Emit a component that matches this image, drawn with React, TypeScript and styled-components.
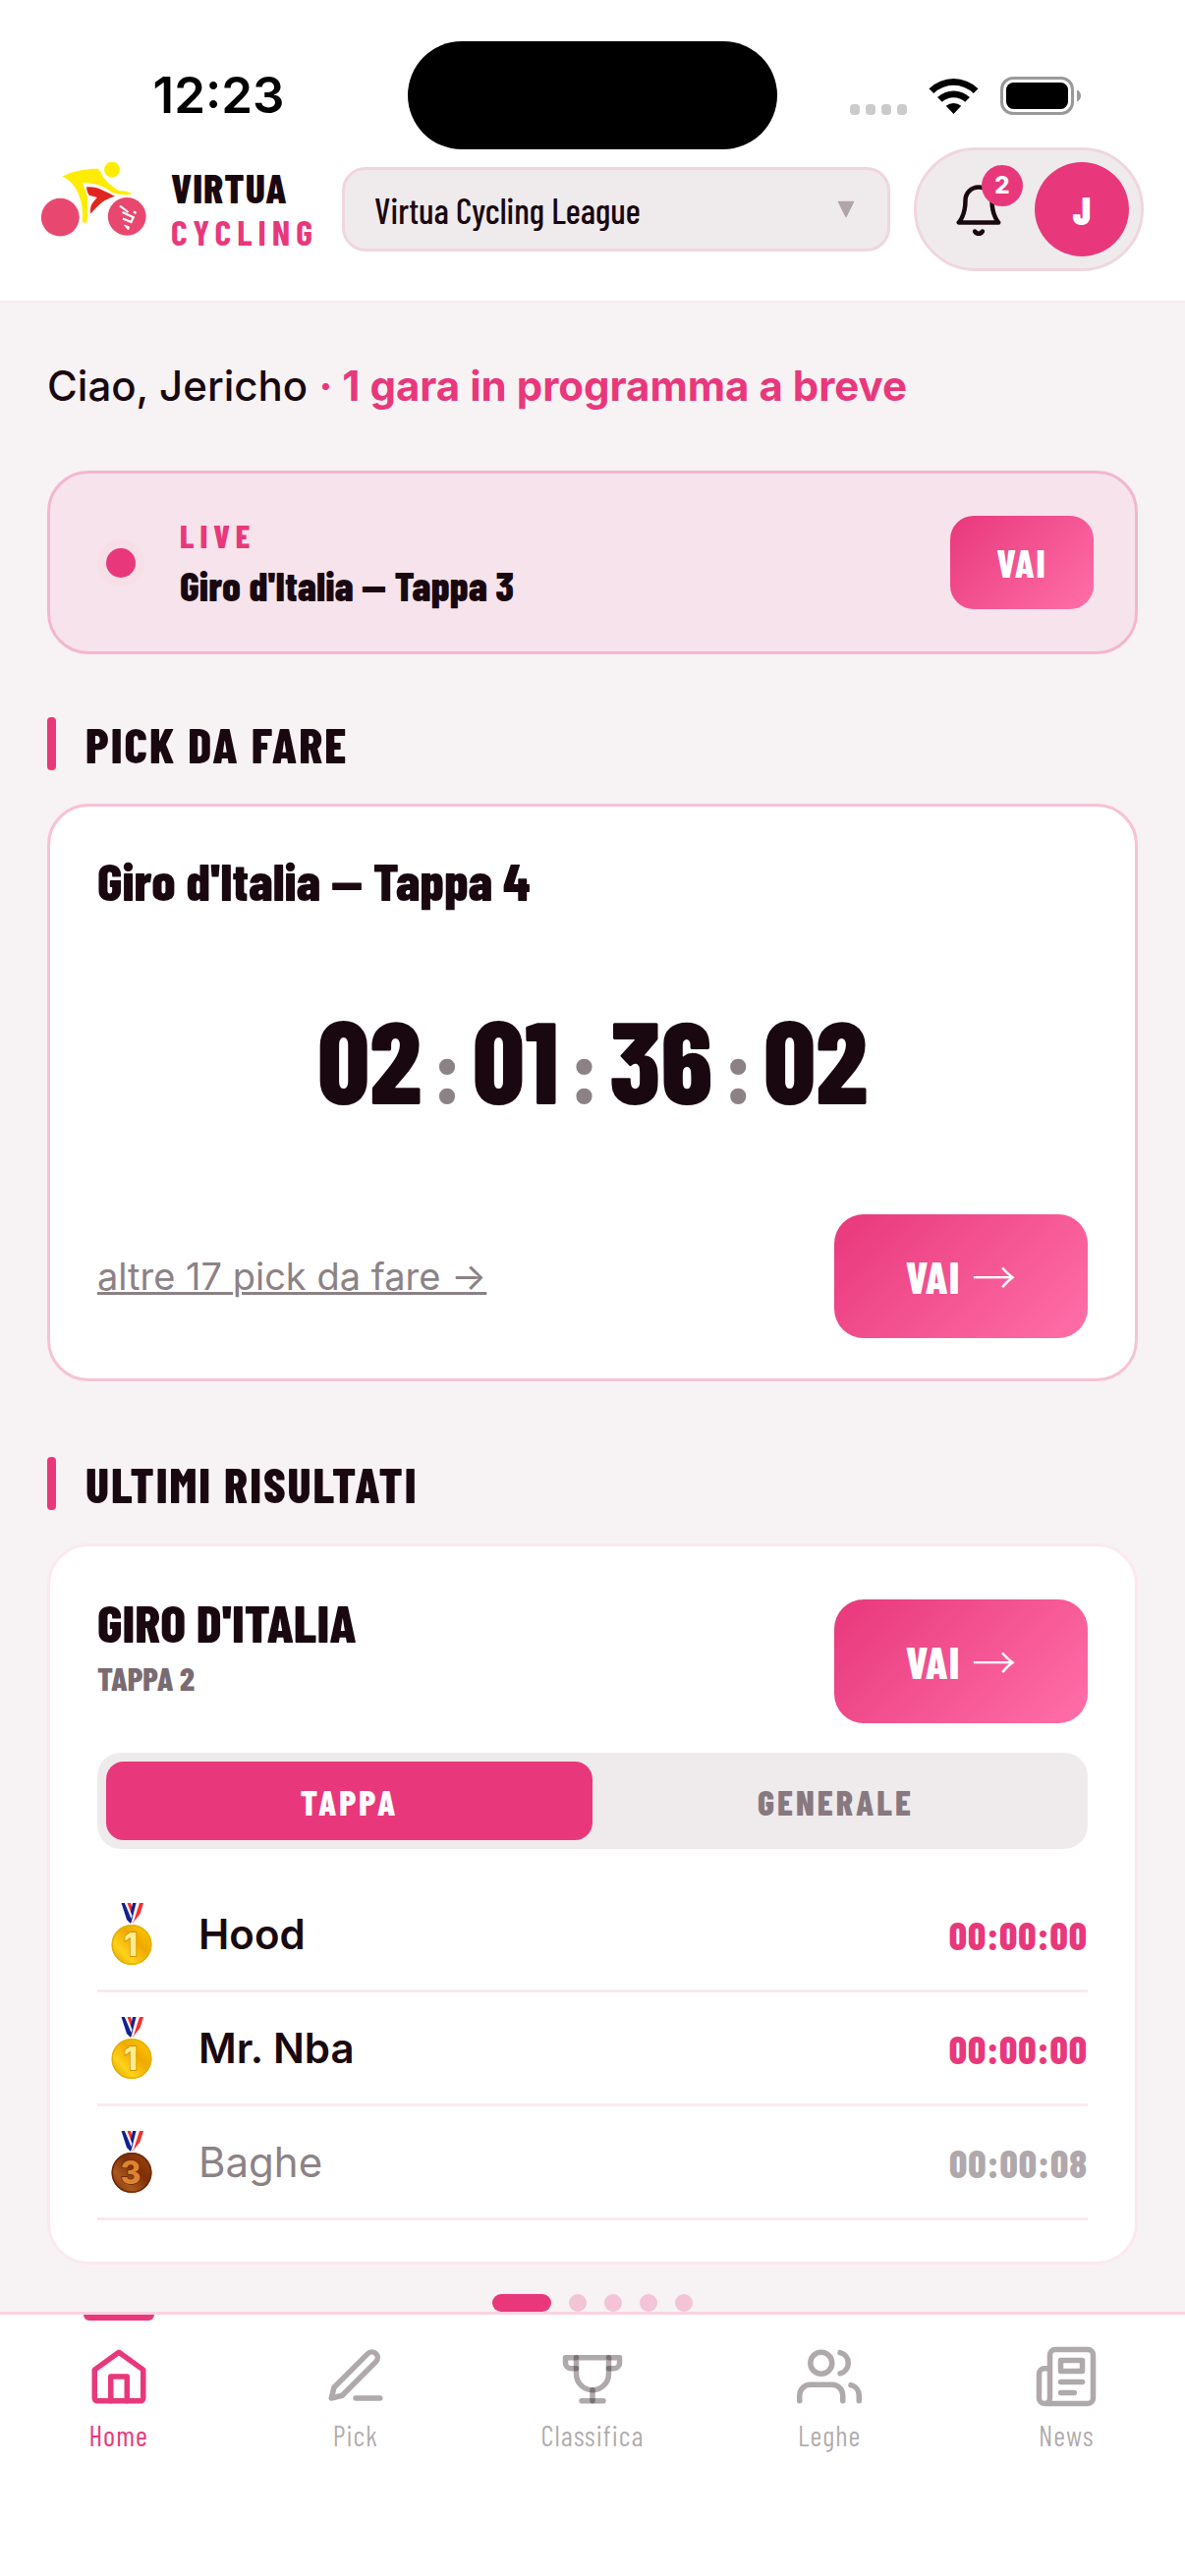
import React, { useState } from 'react';
import styled, { createGlobalStyle, css } from 'styled-components';

const ink = '#1a0810';
const pink = '#e8387b';
const muted = '#8c8286';
const faint = 'rgba(26, 8, 16, 0.35)';
const condensed = '"Barlow Condensed", "Roboto Condensed", sans-serif';
const gradient = 'linear-gradient(135deg, #e8387b, #ff6fa8)';

const GlobalStyle = createGlobalStyle`
  *, *::before, *::after { box-sizing: border-box; }
  body { margin: 0; background: #f7f2f4; color: ${ink}; font-family: Inter, "Open Sans", sans-serif; }
  button, select { font-family: inherit; color: inherit; margin: 0; }
  h1, h2, h3, p, ol, ul { margin: 0; padding: 0; font-weight: inherit; }
  ol, ul { list-style: none; }
  a { color: inherit; text-decoration: none; }
`;

const Page = styled.div`
  display: flex;
  flex-direction: column;
  min-height: 100vh;
`;

const StatusBar = styled.div`
  display: grid;
  grid-template-columns: 1fr auto 1fr;
  grid-template-rows: 110px;
  align-items: center;
  justify-items: center;
  height: 150px;
  padding-top: 42px;
  background: #fff;
  color: #000;
`;

const Clock = styled.time`
  padding-left: 30px;
  font-size: 51px;
  line-height: 60px;
  font-weight: 600;
`;

const Island = styled.div`
  position: relative;
  z-index: 1;
  width: 376px;
  height: 110px;
  border-radius: 55px;
  background: #000;
`;

const StatusIcons = styled.div`
  display: flex;
  align-items: center;
  gap: 22px;
  padding-right: 33px;

  svg { display: block; }
`;

const Header = styled.header`
  display: flex;
  align-items: center;
  gap: 24px;
  padding: 0 42px 30px;
  background: #fff;
  border-bottom: 2px solid #fce8ef;
`;

const Brand = styled.a`
  display: flex;
  align-items: center;
  gap: 24px;
  font-family: ${condensed};

  svg { display: block; }
`;

const BrandName = styled.span`
  display: block;
  font-size: 42px;
  line-height: 46px;
  font-weight: 800;
  letter-spacing: 1px;
`;

const BrandSub = styled.span`
  display: block;
  font-size: 36px;
  line-height: 46px;
  font-weight: 700;
  letter-spacing: 6px;
  color: ${pink};
`;

const LeagueField = styled.label`
  position: relative;
  display: flex;
  flex: 1;
  min-width: 0;

  svg {
    position: absolute;
    right: 36px;
    top: 34px;
    pointer-events: none;
  }
`;

const LeagueSelect = styled.select`
  appearance: none;
  width: 100%;
  height: 86px;
  padding: 0 72px 0 30px;
  border: 3px solid #f0d5df;
  border-radius: 24px;
  background: #efebed;
  color: ${ink};
  font-family: ${condensed};
  font-size: 36px;
  font-weight: 500;
`;

const AccountPill = styled.div`
  display: flex;
  align-items: center;
  gap: 6px;
  padding: 12px;
  border: 3px solid #f0d5df;
  border-radius: 63px;
  background: #efebed;
`;

const BellButton = styled.button`
  position: relative;
  display: grid;
  place-items: center;
  width: 102px;
  height: 96px;
  padding: 0;
  border: 0;
  background: none;
`;

const Badge = styled.span`
  position: absolute;
  top: 3px;
  right: 6px;
  width: 42px;
  height: 42px;
  border-radius: 50%;
  background: ${pink};
  color: #fff;
  font-family: Inter, sans-serif;
  font-size: 24px;
  line-height: 42px;
  font-weight: 800;
  text-align: center;
`;

const Avatar = styled.button`
  width: 96px;
  height: 96px;
  padding: 0;
  border: 0;
  border-radius: 50%;
  background: ${pink};
  color: #fff;
  font-family: ${condensed};
  font-size: 39px;
  font-weight: 900;
`;

const Main = styled.main`
  flex: 1;
  padding: 54px 48px 0;
`;

const Greeting = styled.p`
  margin-bottom: 54px;
  font-size: 42px;
  line-height: 62px;
  font-weight: 500;

  strong { font-weight: 700; color: ${pink}; }
`;

const LiveCard = styled.section`
  display: flex;
  align-items: center;
  gap: 36px;
  margin: 55px 0 64px;
  padding: 43px 42px 43px 48px;
  border: 3px solid #f3b6ce;
  border-radius: 42px;
  background: #f6e3eb;
`;

const LiveDot = styled.span`
  width: 30px;
  height: 30px;
  margin: 9px;
  border-radius: 50%;
  background: ${pink};
  box-shadow: 0 0 0 9px #f7dfe8;
`;

const LiveText = styled.div`
  display: flex;
  flex: 1;
  flex-direction: column;
  gap: 6px;
  height: 95px;
  justify-content: center;
  font-family: ${condensed};
`;

const LiveLabel = styled.p`
  font-size: 33px;
  line-height: 38px;
  font-weight: 800;
  letter-spacing: 6px;
  color: ${pink};
`;

const LiveTitle = styled.h2`
  font-size: 42px;
  line-height: 50px;
  font-weight: 800;
`;

const GoButton = styled.button<{ $small?: boolean }>`
  display: flex;
  align-items: center;
  justify-content: center;
  gap: 12px;
  flex: none;
  width: 258px;
  height: 126px;
  padding: 0;
  border: 0;
  border-radius: 30px;
  background: ${gradient};
  color: #fff;
  font-family: ${condensed};
  font-size: 45px;
  font-weight: 800;
  letter-spacing: 1px;
  ${(p) => p.$small && css`
    width: 146px;
    height: 95px;
    border-radius: 24px;
    font-size: 39px;
    letter-spacing: 2px;
  `}
`;

const Arrow = styled.span`
  font-family: "Noto Sans CJK JP", sans-serif;
  font-weight: 300;
  line-height: 48px;
  letter-spacing: 0;
`;

const SectionTitle = styled.h2`
  display: flex;
  gap: 30px;
  margin-bottom: 34px;
  font-family: ${condensed};
  font-size: 50px;
  line-height: 54px;
  font-weight: 800;
  letter-spacing: 2px;
  text-transform: uppercase;

  &::before {
    content: "";
    width: 9px;
    border-radius: 4px;
    background: ${pink};
  }
`;

const PickCard = styled.section`
  margin-bottom: 77px;
  padding: 42px 48px 41px;
  border: 3px solid #f7c1d6;
  border-radius: 42px;
  background: #fff;
`;

const PickTitle = styled.h3`
  font-family: ${condensed};
  font-size: 54px;
  line-height: 65px;
  font-weight: 800;
`;

const Countdown = styled.div`
  display: flex;
  align-items: baseline;
  justify-content: center;
  gap: 12px;
  margin: 91px 0 101px;
  font-family: ${condensed};
  font-size: 117px;
  line-height: 116px;
  font-weight: 800;
`;

const Colon = styled.span`
  color: ${muted};
  font-size: 93px;
  line-height: 90px;
`;

const CardFooter = styled.div`
  display: flex;
  align-items: center;
  justify-content: space-between;
`;

const MoreLink = styled.a`
  color: ${muted};
  font-size: 38px;
  text-decoration: underline;
  text-decoration-thickness: 3px;
`;

const ResultCard = styled.section`
  padding: 54px 48px 42px;
  border: 3px solid #fce8ef;
  border-radius: 42px;
  background: #fff;
`;

const ResultHead = styled.div`
  display: flex;
  justify-content: space-between;
  margin-bottom: 30px;
  font-family: ${condensed};
`;

const ResultTitle = styled.h3`
  margin-bottom: 12px;
  font-size: 54px;
  line-height: 45px;
  font-weight: 800;
`;

const ResultStage = styled.p`
  font-size: 33px;
  line-height: 46px;
  font-weight: 800;
  color: #7a6b72;
`;

const Tabs = styled.div`
  display: grid;
  grid-template-columns: 1fr 1fr;
  margin-bottom: 30px;
  padding: 9px;
  border-radius: 24px;
  background: #efebed;
`;

const Tab = styled.button<{ $active: boolean }>`
  height: 80px;
  padding: 0;
  border: 0;
  border-radius: 18px;
  background: ${(p) => (p.$active ? pink : 'transparent')};
  color: ${(p) => (p.$active ? '#fff' : '#87797f')};
  font-family: ${condensed};
  font-size: 36px;
  font-weight: 800;
  letter-spacing: 3px;
`;

const Row = styled.li<{ $dim: boolean }>`
  display: grid;
  grid-template-columns: 70px 1fr auto;
  align-items: center;
  column-gap: 33px;
  height: 116px;
  border-bottom: 3px solid #fce8ef;
  font-size: 42px;
  line-height: 50px;
  font-weight: ${(p) => (p.$dim ? 400 : 600)};
  color: ${(p) => (p.$dim ? muted : ink)};

  svg { display: block; margin: 0 auto; }
`;

const Gap = styled.span<{ $dim: boolean }>`
  font-family: ${condensed};
  font-size: 40px;
  font-weight: 800;
  letter-spacing: 1px;
  color: ${(p) => (p.$dim ? '#b0a8ab' : pink)};
`;

const Pager = styled.div`
  display: flex;
  justify-content: center;
  gap: 18px;
  padding-top: 30px;
`;

const PagerDot = styled.button<{ $active: boolean }>`
  width: ${(p) => (p.$active ? 60 : 18)}px;
  height: 18px;
  padding: 0;
  border: 0;
  border-radius: 9px;
  background: ${(p) => (p.$active ? pink : '#f3c3d6')};
`;

const Nav = styled.nav`
  display: grid;
  grid-template-columns: repeat(5, 1fr);
  padding-bottom: 125px;
  border-top: 3px solid #fad3e1;
  background: #fff;
`;

const NavItem = styled.a<{ $active?: boolean }>`
  display: flex;
  flex-direction: column;
  align-items: center;
  gap: 9px;
  color: ${(p) => (p.$active ? pink : faint)};
  font-family: ${condensed};
  font-size: 29px;
  line-height: 36px;
  font-weight: 400;
  letter-spacing: 1px;

  &::before {
    content: "";
    width: 72px;
    height: 6px;
    margin-bottom: 15px;
    border-radius: 0 0 6px 6px;
    background: ${(p) => (p.$active ? pink : 'transparent')};
  }
`;

const CyclistLogo = () => (
  <svg width="108" height="96" viewBox="0 0 108 96" aria-hidden="true">
    <circle cx="19.3" cy="56.2" r="19.4" fill="#e8486f" />
    <circle cx="87.2" cy="55.4" r="19.4" fill="#e8486f" />
    <circle cx="72" cy="7.6" r="7.9" fill="#ffec00" />
    <path fill="#ffec00" d="M21.5 14.5C32 9 46 6.6 57 6.7c3.5.5 4.4 6.500 6.800 9.600 4.200 5 9 9.500 15.200 12.700 4 .5 11 .5 13 3.800-6 .8-13.500.2-19-1.600-5.500-3-10.500-7-16.500-8.400-5-1.400-10-1.800-15-1.500 3 6 5.600 12 5.700 18 .2 8 0 15-.7 22.200h-4.700c.4-8 .2-15-1.400-21.500C38 30.500 33 20 21.500 14.500z" />
    <path fill="#e0261f" d="M46 25.400c6-.4 11.500.4 16 3 4.500 2 9 4 13 6.400-5 1.600-9.500 3.400-13.200 6.200-4.300 3.500-8 7.500-11.400 11.500-.8-3-.4-6 .4-8.500 1.700-3 3.700-5.500 6-8-3-.8-6-1.200-8.300-2.400C47 31 46.400 28.400 46 25.400z" />
    <g stroke="#fff" fill="none" strokeWidth="2.200">
      <path d="M80 44.500 88.500 51" />
      <path d="m82.500 51 12 5.500M94 50.500l2.500 1.500" />
      <path d="m83 57.500 8.500 3.500 2.500-5.500" />
      <path d="m84.500 64 5 2-1 3z" fill="#fff" strokeWidth="1" />
    </g>
  </svg>
);

const StatusGlyphs = () => (
  <>
    <svg width="58" height="39" viewBox="0 0 58 39" fill="#cbcbcb">
      {[0, 16, 32, 48].map((x) => <rect key={x} x={x} y="28" width="10" height="11" rx="4" />)}
    </svg>
    <svg width="51" height="37" viewBox="0 0 51 37">
      <path d="M0.500 11.200A36 36 0 0 1 50.500 11.200L45.800 16A29.300 29.300 0 0 0 5.200 16z" />
      <path d="M9 20A24 24 0 0 1 42 20L37.200 24.800A17.200 17.200 0 0 0 13.800 24.800z" />
      <path d="M17.800 28.800A12 12 0 0 1 33.200 28.800L25.500 37z" />
    </svg>
    <svg width="82" height="39" viewBox="0 0 82 39">
      <rect x="1.500" y="1.500" width="72" height="36" rx="11.500" fill="none" stroke="#999" strokeWidth="3" />
      <rect x="6" y="6" width="63" height="27" rx="7.500" />
      <path d="M78 13.500c2.600 1 4 3.400 4 6s-1.400 5-4 6z" fill="#999" />
    </svg>
  </>
);

const BellIcon = () => (
  <svg width="54" height="54" viewBox="0 0 24 24" fill="none" stroke={ink} strokeWidth="2" strokeLinecap="round" strokeLinejoin="round">
    <path d="M18 8A6 6 0 0 0 6 8c0 7-3 10-3 10h18s-3-3-3-10" />
    <path d="M13.730 22a2 2 0 0 1-3.460 0" />
  </svg>
);

const Medal = ({ place }: { place: number }) => {
  const gold = place === 1;
  const id = `medal-${place}`;
  return (
    <svg width="42" height="64" viewBox="0 0 42 64" role="img" aria-label={`${place}º posto`}>
      <defs>
        <linearGradient id={id} x1="0" y1="1" x2="1" y2="0">
          <stop offset="0" stopColor={gold ? '#d99a00' : '#7a2c06'} />
          <stop offset="0.3" stopColor={gold ? '#ffd21a' : '#a9571f'} />
          <stop offset="0.6" stopColor={gold ? '#f0a800' : '#7d2f07'} />
          <stop offset="1" stopColor={gold ? '#ffd000' : '#a04a12'} />
        </linearGradient>
      </defs>
      <path d="M16 0h4l4 13-3 5z" fill="#ff2a2a" />
      <path d="M28 0h5l-3.500 11-7 9-2-1z" fill="#ff2a2a" />
      <path d="M25 0h4l-6 19-3 1z" fill="#f4f4f8" />
      <path d="M22 0h3.500l-5 20-2-5z" fill="#12218f" />
      <path d="M10.500 0H14l7 15-1 6-4-4z" fill="#12218f" />
      <path d="M14 0h2.500l5 13-1 3z" fill="#f4f4f8" />
      <circle cx="21" cy="42.500" r="20.500" fill={`url(#${id})`} />
      <circle cx="21" cy="42.500" r="19.700" fill="none" stroke={gold ? '#e2b100' : '#6d2804'} strokeWidth="1.500" />
      <text x="20" y="53.500" textAnchor="middle" fontFamily="Inter, sans-serif" fontSize="32" fontWeight="800"
        fill={gold ? '#ffec8a' : '#dd8430'} stroke={gold ? '#c98a00' : '#6d2804'} strokeWidth="1.500" paintOrder="stroke">{place}</text>
    </svg>
  );
};

const icons: Record<string, string[]> = {
  Home: ['M3 9.500 12 3l9 6.500V20a1 1 0 0 1-1 1H4a1 1 0 0 1-1-1z', 'M9 21v-9h6v9'],
  Pick: ['M12 20h9', 'M16.500 3.500a2.120 2.120 0 0 1 3 3L7 19l-4 1 1-4Z'],
  Classifica: ['M6 9H4a2 2 0 0 1-2-2V5h4', 'M18 9h2a2 2 0 0 0 2-2V5h-4', 'M6 5h12v6a6 6 0 0 1-12 0z', 'M12 17v4', 'M8 21h8'],
  Leghe: ['M17 21v-2a4 4 0 0 0-4-4H5a4 4 0 0 0-4 4v2', 'M9 3a4 4 0 1 0 0 8 4 4 0 0 0 0-8', 'M23 21v-2a4 4 0 0 0-3-3.870', 'M16 3.130a4 4 0 0 1 0 7.750'],
  News: ['M4 22h16a2 2 0 0 0 2-2V4a2 2 0 0 0-2-2H8a2 2 0 0 0-2 2v16a2 2 0 0 1-2 2Zm0 0a2 2 0 0 1-2-2v-9c0-1.100.9-2 2-2h2', 'M18 14h-8', 'M15 18h-5', 'M10 6h8v4h-8V6Z'],
};

const NavIcon = ({ name }: { name: string }) => (
  <svg width="66" height="66" viewBox="0 0 24 24" fill="none" stroke="currentColor" strokeWidth="2" strokeLinecap="round" strokeLinejoin="round">
    {icons[name].map((d) => <path key={d} d={d} />)}
  </svg>
);

const results = [
  { name: 'Hood', place: 1, gap: '00:00:00' },
  { name: 'Mr. Nba', place: 1, gap: '00:00:00' },
  { name: 'Baghe', place: 3, gap: '00:00:08' },
];

const countdown = ['02', '01', '36', '02'];

export default function App() {
  const [tab, setTab] = useState('TAPPA');
  const [slide, setSlide] = useState(0);

  return (
    <Page>
      <GlobalStyle />
      <StatusBar>
        <Clock>12:23</Clock>
        <Island />
        <StatusIcons><StatusGlyphs /></StatusIcons>
      </StatusBar>
      <Header>
        <Brand href="#home">
          <CyclistLogo />
          <span>
            <BrandName>VIRTUA</BrandName>
            <BrandSub>CYCLING</BrandSub>
          </span>
        </Brand>
        <LeagueField>
          <LeagueSelect aria-label="Lega" defaultValue="vcl">
            <option value="vcl">Virtua Cycling League</option>
          </LeagueSelect>
          <svg width="18" height="18" viewBox="0 0 18 18" aria-hidden="true">
            <path d="M1.500 1.500h15L9 16.500z" fill="#b0a6aa" stroke="#b0a6aa" strokeWidth="1.500" strokeLinejoin="round" />
          </svg>
        </LeagueField>
        <AccountPill>
          <BellButton aria-label="Notifiche">
            <BellIcon />
            <Badge>2</Badge>
          </BellButton>
          <Avatar>J</Avatar>
        </AccountPill>
      </Header>

      <Main>
        <Greeting>Ciao, Jericho <strong>· 1 gara in programma a breve</strong></Greeting>

        <LiveCard>
          <LiveDot />
          <LiveText>
            <LiveLabel>LIVE</LiveLabel>
            <LiveTitle>Giro d'Italia — Tappa 3</LiveTitle>
          </LiveText>
          <GoButton $small>VAI</GoButton>
        </LiveCard>

        <SectionTitle>Pick da fare</SectionTitle>
        <PickCard>
          <PickTitle>Giro d'Italia — Tappa 4</PickTitle>
          <Countdown>
            {countdown.map((value, i) => (
              <React.Fragment key={i}>
                {i > 0 && <Colon>:</Colon>}
                <span>{value}</span>
              </React.Fragment>
            ))}
          </Countdown>
          <CardFooter>
            <MoreLink href="#pick">altre 17 pick da fare →</MoreLink>
            <GoButton>VAI <Arrow>→</Arrow></GoButton>
          </CardFooter>
        </PickCard>

        <SectionTitle>Ultimi risultati</SectionTitle>
        <ResultCard>
          <ResultHead>
            <div>
              <ResultTitle>GIRO D'ITALIA</ResultTitle>
              <ResultStage>TAPPA 2</ResultStage>
            </div>
            <GoButton>VAI <Arrow>→</Arrow></GoButton>
          </ResultHead>
          <Tabs role="tablist">
            {['TAPPA', 'GENERALE'].map((name) => (
              <Tab key={name} role="tab" aria-selected={tab === name} $active={tab === name} onClick={() => setTab(name)}>{name}</Tab>
            ))}
          </Tabs>
          <ol>
            {results.map((r) => (
              <Row key={r.name} $dim={r.place > 1}>
                <Medal place={r.place} />
                <span>{r.name}</span>
                <Gap $dim={r.place > 1}>{r.gap}</Gap>
              </Row>
            ))}
          </ol>
        </ResultCard>
        <Pager>
          {[0, 1, 2, 3, 4].map((i) => (
            <PagerDot key={i} $active={slide === i} aria-label={`Risultato ${i + 1}`} onClick={() => setSlide(i)} />
          ))}
        </Pager>
      </Main>

      <Nav>
        {Object.keys(icons).map((name, i) => (
          <NavItem key={name} href={`#${name.toLowerCase()}`} $active={i === 0}>
            <NavIcon name={name} />
            {name}
          </NavItem>
        ))}
      </Nav>
    </Page>
  );
}
